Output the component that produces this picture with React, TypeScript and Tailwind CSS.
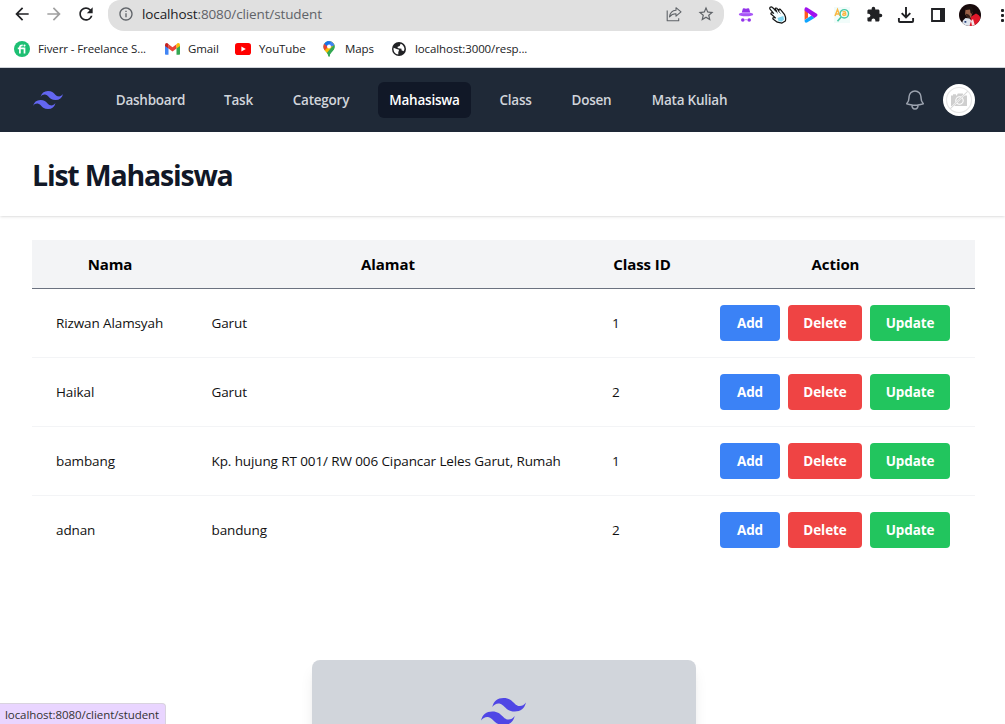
import React from 'react';
import { MdArrowBack, MdArrowForward, MdRefresh, MdInfoOutline, MdStarBorder, MdExtension } from 'react-icons/md';
import { HiOutlineBell } from 'react-icons/hi2';

function TailwindMark({ className }: { className: string }) {
  return (
    <svg viewBox="0 4.8 24 14.4" className={className} fill="currentColor">
      <path d="M12 4.8c-3.2 0-5.2 1.6-6 4.8 1.2-1.6 2.6-2.2 4.2-1.8.913.228 1.565.89 2.288 1.624C13.666 10.618 15.027 12 18 12c3.2 0 5.2-1.6 6-4.8-1.2 1.6-2.6 2.2-4.2 1.8-.913-.228-1.565-.89-2.288-1.624C16.334 6.182 14.973 4.8 12 4.8zM6 12c-3.2 0-5.2 1.6-6 4.8 1.2-1.6 2.6-2.2 4.2-1.8.913.228 1.565.89 2.288 1.624C7.666 17.818 9.027 19.2 12 19.2c3.2 0 5.2-1.6 6-4.8-1.2 1.6-2.6 2.2-4.2 1.8-.913-.228-1.565-.89-2.288-1.624C10.334 13.382 8.973 12 6 12z" />
    </svg>
  );
}

function ShareIcon() {
  return (
    <svg width="16" height="16" viewBox="0 0 16 16" fill="none" stroke="#5f6368" strokeWidth="1.1" strokeLinejoin="round">
      <path d="M1.200 4.500v10.300h11.500v-2.600" />
      <path d="M10 1.700 15 5.900 10 10.200V7.700C7 7.600 5.200 8.700 3.500 10.800 4 7 6.200 4.400 10 4.200Z" />
    </svg>
  );
}

function IncognitoIcon() {
  return (
    <svg width="16" height="16" viewBox="0 0 16 16" fill="#9333ea">
      <path d="M3.800 5.500 4.800 1.800Q5 1 6 1.200L8 1.700l2-.5q1-.2 1.200.6L12.200 5.500Z" />
      <ellipse cx="8" cy="7.400" rx="7.200" ry="1.900" fill="#a855f7" />
      <path d="M4 5.200h8v1.300H4z" fill="#c084fc" />
      <circle cx="4.800" cy="13" r="1.800" />
      <circle cx="11.200" cy="13" r="1.800" />
      <path d="M6.500 12.200h3v1h-3z" fill="#c084fc" />
    </svg>
  );
}

function HandIcon() {
  return (
    <svg width="18" height="18" viewBox="0 0 18 18">
      <path d="M1.200 1.200Q2.300.3 3.500 1.500L7.600 5.400 6.200 2.900Q6.300 1.500 7.900 2.300L10 5 9.800 3.400Q10.800 2.500 12 4.200l3.600 4.500q1.600 3 .8 6.200L13 17.100 8.300 16.200 4 13q-.6-1.400 1-1.500l1.500.4L2 8Q1.600 6.400 3.400 6.700L4.600 7.300 1 3.200Q.4 2 1.200 1.200Z" fill="#f4fdff" stroke="#111" strokeWidth="1.200" strokeLinejoin="round" />
      <path d="M8.500 12 14.300 10 15 13.500 12.500 15.800 9.500 15Z" fill="#7dd3ee" />
      <path d="M5 3.500 9 7.300M9 4.800 11.500 7.500" stroke="#222" strokeWidth=".7" />
    </svg>
  );
}

function PlayIcon() {
  return (
    <svg width="14" height="16" viewBox="0 0 14 16">
      <path d="M.6 2.500 4 4.500V10.500L.6 13Z" fill="#ff5a1f" />
      <path d="M.6 13 7.500 8.500l3 2.500L3 15.600Q.6 16.300.6 14Z" fill="#0ea5ff" />
      <path d="M.6 1.800Q1 -.2 3 .5L12.800 6.800q1.400 1.200 0 2.400L10.300 11 7.300 8.500 .8 3.800Q.4 3 .6 1.800Z" fill="#a012ee" />
      <path d="M4 6.200 6.800 8.200 4 10Z" fill="#fff" />
    </svg>
  );
}

function LetterSearchIcon() {
  return (
    <svg width="16" height="16" viewBox="0 0 16 16" fill="none">
      <rect width="16" height="16" fill="#f1fcfa" />
      <path d="M1 9 3.500 2.500 6 9M2 7h3.200" stroke="#fbb743" strokeWidth="1.500" />
      <circle cx="10.300" cy="6.800" r="4.200" stroke="#4bc9a5" strokeWidth="1.400" />
      <path d="M8.500 5Q11.500 3.700 11.700 6.500V8.800M11.500 6.500Q8.500 6.300 8.700 7.700 9.500 9.200 11.500 7.700" stroke="#fbb743" strokeWidth="1.400" />
      <path d="M7.200 10 3.500 14.200" stroke="#4bc9a5" strokeWidth="1.700" />
    </svg>
  );
}

function DownloadIcon() {
  return (
    <svg width="18" height="18" viewBox="0 0 18 18" fill="none" stroke="#202124" strokeWidth="1.900">
      <path d="M9 1v10M4.700 7.200 9 11.500l4.300-4.300M1.900 12v3q0 1 1 1h12.200q1 0 1-1v-3" />
    </svg>
  );
}

function PanelIcon() {
  return (
    <svg width="14" height="14" viewBox="0 0 14 14">
      <path d="M1 1h12v12H1z" fill="#fff" stroke="#202124" strokeWidth="1.800" />
      <path d="M9 0h5v14H9z" fill="#202124" />
    </svg>
  );
}

function ProfilePhoto() {
  return (
    <svg width="22" height="22" viewBox="0 0 22 22">
      <defs>
        <clipPath id="profile-clip"><circle cx="11" cy="11" r="11" /></clipPath>
      </defs>
      <g clipPath="url(#profile-clip)">
        <rect width="22" height="22" fill="#17090b" />
        <path d="M2 22 4 16.500 6.500 14l4 .5 2 2v6Z" fill="#dfe5ee" />
        <path d="M11.500 13 17 9.500q3 1 4.500 4l-2 8.500h-9l1.500-5Z" fill="#df1729" />
        <path d="M14 15 16 22h-3l-1-5Z" fill="#f5e9ea" />
        <path d="M6.500 6Q8 2 12 4l1.500 4.500-1.500 5-3.500 0L6 10Z" fill="#9c6048" />
        <path d="M6 5Q8 1 12.500 2.500L14.500 6 13 10l-1.500-1L11 5.500 7 6Z" fill="#1b1210" />
        <path d="M6.500 9.500 9.500 10.500 11 12v1.500H8Z" fill="#38201a" />
        <path d="M5.500 17h1.800v1.800H5.500z" fill="#26427a" />
      </g>
    </svg>
  );
}

function FiverrIcon() {
  return (
    <svg width="16" height="16" viewBox="0 0 16 16">
      <circle cx="8" cy="8" r="8" fill="#1dbf73" />
      <path d="M3.800 7.400h6.700V12.400M5.900 12.400V6.200q0-2 2.800-1.800" fill="none" stroke="#fff" strokeWidth="1.700" />
      <circle cx="10.500" cy="4.600" r="1.050" fill="#fff" />
    </svg>
  );
}

function GmailIcon() {
  return (
    <svg width="15" height="12" viewBox="0 0 15 12">
      <path d="M0 2v9q0 .8.800.8h2.700V4Z" fill="#4285f4" />
      <path d="M15 2v9q0 .8-.8.8h-2.700V4Z" fill="#34a853" />
      <path d="M3.500 1.200 7.500 4.200l4-3v4.300l-4 3-4-3Z" fill="#ea4335" />
      <path d="M0 2Q0 0 1.700 0q.8 0 1.800 1.200v4.300L0 3Z" fill="#c5221f" />
      <path d="M15 2q0-2-1.700-2-.8 0-1.800 1.200v4.300L15 3Z" fill="#fbbc04" />
    </svg>
  );
}

function YouTubeIcon() {
  return (
    <svg width="16" height="12" viewBox="0 0 16 12">
      <rect width="16" height="12" rx="2.800" fill="#f00" />
      <path d="M6.400 3.400v5.200L10.800 6Z" fill="#fff" />
    </svg>
  );
}

function MapsIcon() {
  return (
    <svg width="12" height="16" viewBox="0 0 12 16">
      <defs>
        <clipPath id="pin-clip"><path d="M6 0a5.600 5.600 0 0 1 5.600 5.600C11.600 9.800 7.400 10.800 6.600 15.200Q6 16.400 5.400 15.200C4.600 10.800.4 9.800.4 5.600A5.600 5.600 0 0 1 6 0Z" /></clipPath>
      </defs>
      <g clipPath="url(#pin-clip)">
        <path d="M0 0h12v16H0z" fill="#34a853" />
        <path d="M0 9.500 8 0h4v4L3.500 13 0 11Z" fill="#fbbc04" />
        <path d="M4 0h8v4.500L6 6Z" fill="#4285f4" />
        <path d="M0 0h4l4 1-4 5-4-3Z" fill="#1a73e8" />
        <path d="M0 2 5 6 0 11Z" fill="#ea4335" />
        <path d="M8 7 12 3v6l-5 7-4-3Z" fill="#34a853" />
      </g>
      <circle cx="6" cy="5.600" r="2" fill="#fff" />
    </svg>
  );
}

function GlobeIcon() {
  return (
    <svg width="14" height="14" viewBox="0 0 14 14">
      <circle cx="7" cy="7" r="7" fill="#202124" />
      <path d="M1.600 5.800 5.300 7.200Q7 7 7 8.500L6.300 10v2.400Q2 12 1.500 7.500Z" fill="#fff" />
      <path d="M8.600 1.700Q12 3 12.500 7l-.9 2.300L9.500 8.300V6.800L6.300 6.300 5.200 5l2.500-1Z" fill="#fff" />
    </svg>
  );
}

function NoPhotoAvatar() {
  return (
    <svg width="32" height="32" viewBox="0 0 32 32">
      <circle cx="16" cy="16" r="16" fill="#fff" />
      <circle cx="16" cy="16" r="12.500" fill="none" stroke="#e6e6e6" strokeWidth="1.200" />
      <path d="M8 11.500h2v-1.200h3v1.200h.8l1-1.900h5l1 1.900H24v10.500H8Z" fill="#cfcfcf" />
      <circle cx="16.500" cy="16.500" r="3.700" fill="#cfcfcf" stroke="#fff" strokeWidth="1.100" />
      <path d="M7.200 24.800 24.800 7.200" stroke="#f4f4f4" strokeWidth="1.800" />
      <path d="M7.200 24.800 24.800 7.200" stroke="#dadada" strokeWidth="1" />
    </svg>
  );
}

const students = [
  { name: 'Rizwan Alamsyah', address: 'Garut', classId: 1 },
  { name: 'Haikal', address: 'Garut', classId: 2 },
  { name: 'bambang', address: 'Kp. hujung RT 001/ RW 006 Cipancar Leles Garut, Rumah', classId: 1 },
  { name: 'adnan', address: 'bandung', classId: 2 },
];

const links = [
  { label: 'Dashboard', size: 'w-[93px]' },
  { label: 'Task', size: 'w-[51px]' },
  { label: 'Category', size: 'w-[82px]' },
  { label: 'Mahasiswa', size: 'w-[93px]' },
  { label: 'Class', size: 'w-[57px]' },
  { label: 'Dosen', size: 'w-[63px]' },
  { label: 'Mata Kuliah', size: 'w-[101px]' },
];

function BrowserBar() {
  return (
    <header className="h-[68px] shrink-0 border-b border-[#cfd3d9] bg-white text-[#202124]">
      <div className="flex h-[31px] items-start">
        <div className="flex w-[108px] shrink-0 gap-[12px] pl-[12px] pt-[4px]">
          <MdArrowBack size={20} />
          <MdArrowForward size={20} className="text-[#a0a0a0]" />
          <MdRefresh size={20} />
        </div>
        <div className="flex h-[31px] w-[616px] shrink-0 items-center rounded-b-[16px] rounded-t-[12px] bg-[#e0e0e0] pb-[3px] pl-[10px] pr-[9px]">
          <MdInfoOutline size={16} className="text-[#5f6368]" />
          <span className="ml-[8px] flex-1 whitespace-nowrap text-[13.5px] tracking-[-0.12px] text-[#5f6368]">
            <span className="text-[#202124]">localhost</span>:8080/client/student
          </span>
          <ShareIcon />
          <MdStarBorder size={18} className="ml-[15px] text-[#5f6368]" />
        </div>
        <div className="flex h-[29px] flex-1 items-center overflow-hidden">
          <div className="ml-[6px] flex w-[32px] shrink-0 justify-center"><IncognitoIcon /></div>
          <div className="flex w-[32px] shrink-0 justify-center"><HandIcon /></div>
          <div className="flex w-[32px] shrink-0 justify-center pl-[2px]"><PlayIcon /></div>
          <div className="flex w-[32px] shrink-0 justify-center"><LetterSearchIcon /></div>
          <div className="flex w-[32px] shrink-0 justify-center"><MdExtension size={17} /></div>
          <div className="flex w-[32px] shrink-0 justify-center"><DownloadIcon /></div>
          <div className="flex w-[32px] shrink-0 justify-center"><PanelIcon /></div>
          <div className="flex w-[32px] shrink-0 justify-center"><ProfilePhoto /></div>
          <svg width="4" height="14" viewBox="0 0 4 14" className="ml-[15px] shrink-0" fill="#202124">
            <rect y="1" width="3" height="3" rx="1" /><rect y="6" width="3" height="3" rx="1" /><rect y="11" width="3" height="3" rx="1" />
          </svg>
        </div>
      </div>
      <div className="flex h-[36px] items-center whitespace-nowrap pl-[14px] text-[11.5px] tracking-[-0.1px]">
        <div className="flex w-[151px] items-center gap-[8px]"><FiverrIcon /><span>Fiverr - Freelance S...</span></div>
        <div className="flex w-[70px] items-center gap-[8px]"><GmailIcon /><span>Gmail</span></div>
        <div className="flex w-[88px] items-center gap-[8px]"><YouTubeIcon /><span>YouTube</span></div>
        <div className="flex w-[69px] items-center gap-[10px]"><MapsIcon /><span>Maps</span></div>
        <div className="flex items-center gap-[9px]"><GlobeIcon /><span>localhost:3000/resp...</span></div>
      </div>
    </header>
  );
}

function Navbar() {
  return (
    <nav className="flex h-16 shrink-0 items-center bg-[#1f2937] px-8">
      <TailwindMark className="ml-px h-[18px] w-[30px] text-[#6366f1]" />
      <div className="ml-[41px] flex gap-4">
        {links.map((l) => (
          <a
            key={l.label}
            className={`${l.size} flex h-9 items-center justify-center whitespace-nowrap rounded-md pt-px text-[13.5px] font-semibold tracking-[-0.23px] ${
              l.label === 'Mahasiswa' ? 'bg-[#111827] text-white' : 'text-[#d1d5db]'
            }`}
          >
            {l.label}
          </a>
        ))}
      </div>
      <HiOutlineBell size={24} className="ml-auto text-[#9ca3af]" />
      <div className="-mr-[2px] ml-4"><NoPhotoAvatar /></div>
    </nav>
  );
}

function StudentTable() {
  const button = 'flex h-9 items-center justify-center rounded pt-px text-[13.5px] font-bold tracking-[-0.1px] text-white';
  return (
    <table className="w-[943px] shrink-0 table-fixed border-separate border-spacing-0">
      <colgroup>
        <col className="w-[156px]" />
        <col className="w-[400px]" />
        <col className="w-[108px]" />
        <col className="w-[279px]" />
      </colgroup>
      <thead>
        <tr className="h-[49px] bg-[#f3f4f6] text-[15px] text-black">
          {['Nama', 'Alamat', 'Class ID', 'Action'].map((h) => (
            <th key={h} className="border-b border-[#6b7280] p-0 pt-px font-bold tracking-[-0.08px]">{h}</th>
          ))}
        </tr>
      </thead>
      <tbody className="text-[13.5px] tracking-[-0.11px] text-[#111]">
        {students.map((s, i) => {
          const edge = i < students.length - 1 ? 'border-b border-[#f3f4f6]' : 'border-b border-transparent';
          return (
            <tr key={s.name} className="h-[69px] whitespace-nowrap">
              <td className={`${edge} py-0 pl-6`}>{s.name}</td>
              <td className={`${edge} py-0 pl-[23.5px]`}>{s.address}</td>
              <td className={`${edge} py-0 pl-6`}>{s.classId}</td>
              <td className={`${edge} py-0 pl-6`}>
                <div className="flex gap-2">
                  <button className={`${button} w-[60px] bg-[#3b82f6]`}>Add</button>
                  <button className={`${button} w-[74px] bg-[#ef4444]`}>Delete</button>
                  <button className={`${button} w-[80px] bg-[#22c55e]`}>Update</button>
                </div>
              </td>
            </tr>
          );
        })}
      </tbody>
    </table>
  );
}

export default function App() {
  return (
    <div className="relative flex h-[724px] w-[1005px] flex-col overflow-hidden bg-white font-['Open_Sans','Noto_Sans',sans-serif]">
      <BrowserBar />
      <Navbar />
      <div className="flex h-[84px] shrink-0 items-center bg-white px-8 pb-px pt-[4px] shadow">
        <h1 className="text-[28.5px] font-bold tracking-[-1.2px] text-[#111827]">List Mahasiswa</h1>
      </div>
      <main className="shrink-0 px-8 pt-6">
        <StudentTable />
        <div className="ml-[280px] mt-[95px] flex h-[200px] w-[384px] justify-center rounded-lg bg-[#d1d5db] pr-[2px] pt-[38px] shadow-lg">
          <TailwindMark className="h-[27px] w-[45px] text-[#4f46e5]" />
        </div>
      </main>
      <div className="absolute bottom-0 left-0 flex h-[21px] w-[166px] items-center whitespace-nowrap rounded-tr border-r border-t border-[#d9d3df] bg-[#e9d5ff] pl-[5px] pt-px text-[11.5px] tracking-[-0.07px] text-[#333]">
        localhost:8080/client/student
      </div>
    </div>
  );
}
